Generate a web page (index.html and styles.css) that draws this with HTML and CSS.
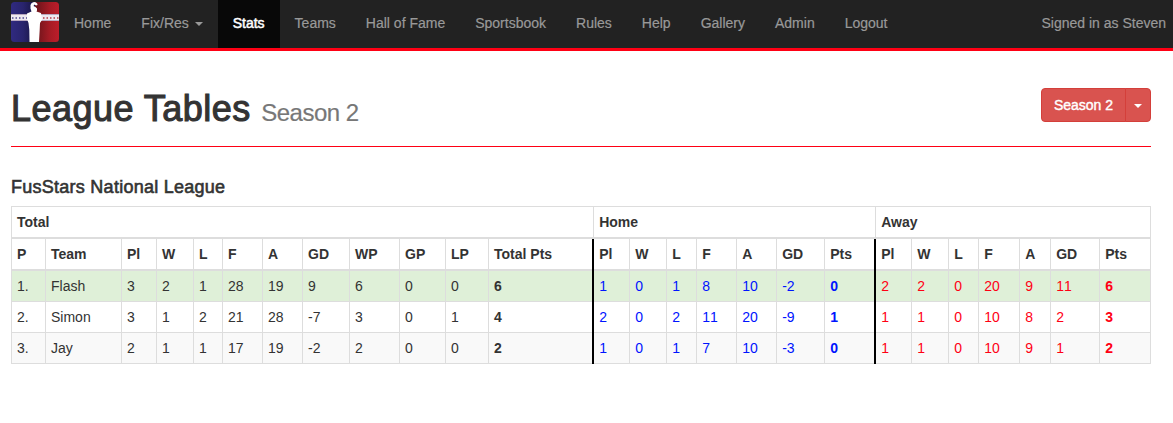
FILE: index.html
```html
<!DOCTYPE html>
<html lang="en">
<head>
<meta charset="utf-8">
<title>League Tables</title>
<link rel="stylesheet" href="styles.css">
</head>
<body>
<nav class="navbar">
  <a class="brand" href="#">
    <svg width="48" height="40" viewBox="0 0 48 40">
      <defs>
        <linearGradient id="blue"><stop offset="0" stop-color="#302a80"/><stop offset=".5" stop-color="#29246d"/><stop offset="1" stop-color="#171441"/></linearGradient>
        <linearGradient id="red"><stop offset="0" stop-color="#68141a"/><stop offset=".6" stop-color="#a51b25"/><stop offset="1" stop-color="#bd1d2a"/></linearGradient>
        <clipPath id="round"><rect width="48" height="40" rx="3.5"/></clipPath>
      </defs>
      <g clip-path="url(#round)">
        <rect width="24" height="40" fill="url(#blue)"/>
        <rect x="24" width="24" height="40" fill="url(#red)"/>
        <rect y="12" width="48" height="7" fill="#eee9f0"/>
        <path d="M0 12.500h48M0 18.500h48" stroke="#b9a9c0" stroke-width="1"/>
        <path d="M1 16h16" stroke="#514a91" stroke-width="1.4" stroke-dasharray="1.5 2"/>
        <path d="M32 16h16" stroke="#b63b48" stroke-width="1.4" stroke-dasharray="1.5 2"/>
        <path d="M19.500 3Q20 .3 23 0Q26.500 .3 26.500 3L25 3.500L23.500 2.500L22.500 4L24.500 5L26 6.500L26 8.500L25.500 9.500L30 11L31 18L29 21L28.700 28L28 40H18.500L18.300 28L17.500 21L16 17V11.500L20.500 9.500L19.500 6.500Z" fill="#fff"/>
      </g>
    </svg>
  </a>
  <ul class="nav">
    <li><a href="#">Home</a></li>
    <li><a href="#">Fix/Res <b class="caret"></b></a></li>
    <li class="active"><a href="#">Stats</a></li>
    <li><a href="#">Teams</a></li>
    <li><a href="#">Hall of Fame</a></li>
    <li><a href="#">Sportsbook</a></li>
    <li><a href="#">Rules</a></li>
    <li><a href="#">Help</a></li>
    <li><a href="#">Gallery</a></li>
    <li><a href="#">Admin</a></li>
    <li><a href="#">Logout</a></li>
  </ul>
  <p class="signed">Signed in as Steven</p>
</nav>
<main class="container">
  <header class="page-header">
    <h1>League Tables <small>Season 2</small></h1>
    <div class="btn-group">
      <button class="btn">Season 2</button>
      <button class="btn toggle" aria-label="Choose season"><span class="caret"></span></button>
    </div>
  </header>
  <h4>FusStars National League</h4>
  <table class="league">
    <colgroup>
      <col class="w34"><col class="w76"><col class="w35"><col class="w37"><col class="w29"><col class="w40"><col class="w40"><col class="w47"><col class="w50"><col class="w46"><col class="w43"><col class="w105">
      <col class="w36"><col class="w37"><col class="w30"><col class="w40"><col class="w40"><col class="w48"><col class="w51">
      <col class="w36"><col class="w37"><col class="w30"><col class="w41"><col class="w31"><col class="w49"><col class="w51">
    </colgroup>
    <thead>
      <tr><th colspan="12">Total</th><th colspan="7">Home</th><th colspan="7">Away</th></tr>
      <tr><th>P</th><th>Team</th><th>Pl</th><th>W</th><th>L</th><th>F</th><th>A</th><th>GD</th><th>WP</th><th>GP</th><th>LP</th><th class="edge">Total Pts</th><th>Pl</th><th>W</th><th>L</th><th>F</th><th>A</th><th>GD</th><th class="edge">Pts</th><th>Pl</th><th>W</th><th>L</th><th>F</th><th>A</th><th>GD</th><th>Pts</th></tr>
    </thead>
    <tbody>
      <tr class="success"><td>1.</td><td>Flash</td><td>3</td><td>2</td><td>1</td><td>28</td><td>19</td><td>9</td><td>6</td><td>0</td><td>0</td><td class="edge pts">6</td><td class="home">1</td><td class="home">0</td><td class="home">1</td><td class="home">8</td><td class="home">10</td><td class="home">-2</td><td class="home edge pts">0</td><td class="away">2</td><td class="away">2</td><td class="away">0</td><td class="away">20</td><td class="away">9</td><td class="away">11</td><td class="away pts">6</td></tr>
      <tr><td>2.</td><td>Simon</td><td>3</td><td>1</td><td>2</td><td>21</td><td>28</td><td>-7</td><td>3</td><td>0</td><td>1</td><td class="edge pts">4</td><td class="home">2</td><td class="home">0</td><td class="home">2</td><td class="home">11</td><td class="home">20</td><td class="home">-9</td><td class="home edge pts">1</td><td class="away">1</td><td class="away">1</td><td class="away">0</td><td class="away">10</td><td class="away">8</td><td class="away">2</td><td class="away pts">3</td></tr>
      <tr class="striped"><td>3.</td><td>Jay</td><td>2</td><td>1</td><td>1</td><td>17</td><td>19</td><td>-2</td><td>2</td><td>0</td><td>0</td><td class="edge pts">2</td><td class="home">1</td><td class="home">0</td><td class="home">1</td><td class="home">7</td><td class="home">10</td><td class="home">-3</td><td class="home edge pts">0</td><td class="away">1</td><td class="away">1</td><td class="away">0</td><td class="away">10</td><td class="away">9</td><td class="away">1</td><td class="away pts">2</td></tr>
    </tbody>
  </table>
</main>
</body>
</html>
```
FILE: styles.css
```css
* { box-sizing: border-box; }
body {
  margin: 0;
  background: #fff;
  color: #333;
  font: 14px/20px "Liberation Sans", Arial, sans-serif;
}
.navbar {
  display: flex;
  height: 51px;
  padding: 0 7px 0 11px;
  background: #222;
  border-bottom: 3px solid #ff0014;
}
.brand { display: block; width: 48px; padding-top: 2px; }
.brand svg { display: block; }
.nav { display: flex; margin: 0; padding: 0; list-style: none; }
.nav a {
  display: block;
  height: 48px;
  padding: 13px 15px 15px;
  color: #999;
  text-decoration: none;
  white-space: nowrap;
  -webkit-text-stroke: .2px #999;
}
.nav .active a {
  background: #080808;
  color: #fff;
  -webkit-text-stroke: .5px #fff;
}
.signed {
  margin: 13px 0 0 auto;
  color: #999;
  white-space: nowrap;
  -webkit-text-stroke: .2px #999;
}
.caret {
  display: inline-block;
  margin-left: 2px;
  vertical-align: middle;
  border-top: 4px solid;
  border-right: 4px solid transparent;
  border-left: 4px solid transparent;
}
.container { width: 1140px; margin-left: 11px; }
.page-header {
  display: flex;
  justify-content: space-between;
  height: 96px;
  padding-top: 38px;
  border-bottom: 1px solid #ff0014;
}
h1 {
  margin: 0;
  font-size: 36px;
  line-height: 40px;
  font-weight: 400;
  letter-spacing: .48px;
  -webkit-text-stroke: 1.1px #333;
}
h1 small {
  font-size: 24px;
  letter-spacing: -.5px;
  color: #777;
  -webkit-text-stroke: .2px #777;
}
.btn-group { display: flex; height: 34px; margin-top: -1px; }
.btn {
  width: 85px;
  padding: 0;
  border: 1px solid #d43f3a;
  border-radius: 4px 0 0 4px;
  background: #d9534f;
  color: #fff;
  font: inherit;
  -webkit-text-stroke: .4px #fff;
}
.toggle { width: 26px; margin-left: -1px; border-radius: 0 4px 4px 0; }
.toggle .caret { display: block; margin: 2px auto 0; width: 0; }
h4 {
  height: 59px;
  margin: 0;
  padding-top: 30px;
  font-size: 18px;
  font-weight: 400;
  letter-spacing: .26px;
  -webkit-text-stroke: .6px #333;
}
.league {
  width: 1140px;
  table-layout: fixed;
  border-collapse: separate;
  border-spacing: 0;
  border-top: 1px solid #ddd;
  border-left: 1px solid #ddd;
  font-kerning: none;
}
.league th, .league td {
  padding: 5px 0 5px 5px;
  border-right: 1px solid #ddd;
  border-bottom: 1px solid #ddd;
  text-align: left;
  white-space: nowrap;
}
.league th { height: 32px; border-bottom-width: 2px; font-kerning: auto; }
.league td { height: 31px; }
.league .edge {
  border-right: 2px solid #000;
  border-bottom: 0;
  padding-bottom: 6px;
  box-shadow: inset 0 -1px #ddd;
}
.league th.edge { padding-bottom: 7px; box-shadow: inset 0 -2px #ddd; }
.success { background: #dff0d8; }
.striped { background: #f9f9f9; }
.pts { font-weight: 700; }
.home { color: #0014ff; }
.away { color: #ff0014; }
.w29 { width: 29px; }
.w30 { width: 30px; }
.w31 { width: 31px; }
.w34 { width: 34px; }
.w35 { width: 35px; }
.w36 { width: 36px; }
.w37 { width: 37px; }
.w40 { width: 40px; }
.w41 { width: 41px; }
.w43 { width: 43px; }
.w46 { width: 46px; }
.w47 { width: 47px; }
.w48 { width: 48px; }
.w49 { width: 49px; }
.w50 { width: 50px; }
.w51 { width: 51px; }
.w76 { width: 76px; }
.w105 { width: 105px; }
```
